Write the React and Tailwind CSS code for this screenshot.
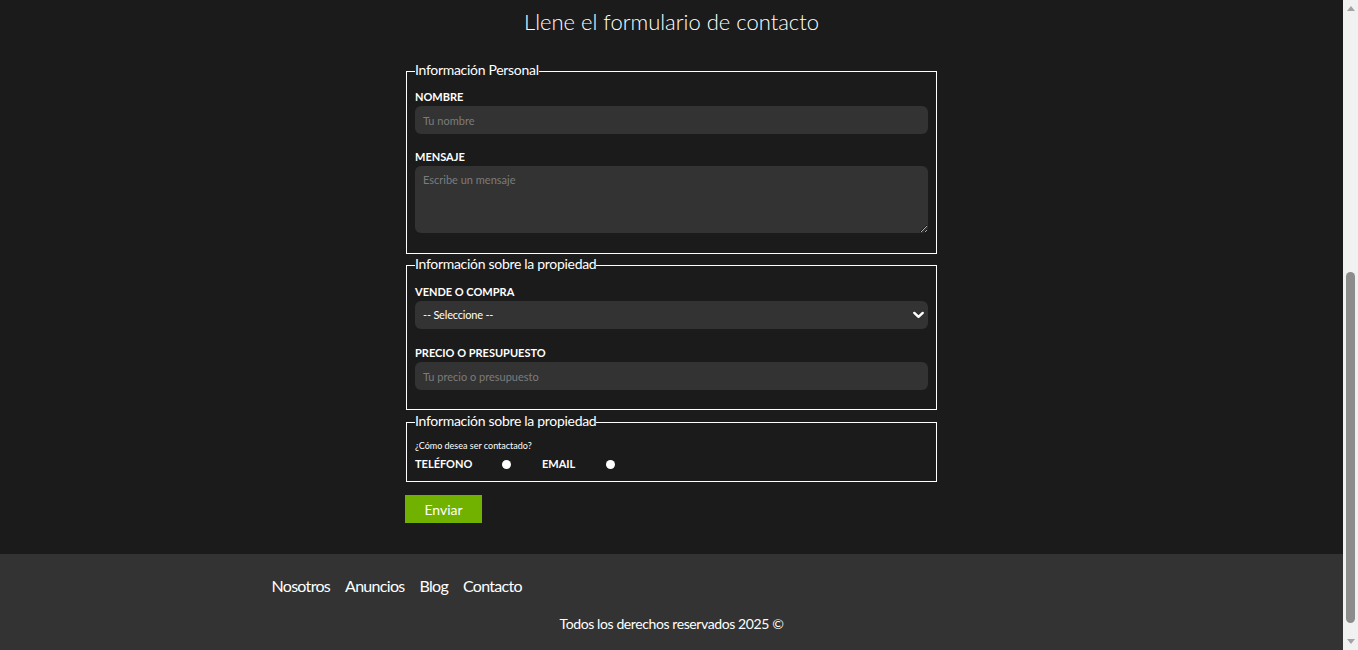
import { useState } from 'react';

const inputCls =
  'block w-full h-[28px] mt-[2px] px-2 rounded-md bg-[#333333] text-white text-[11px] placeholder:text-[#7c7c7c] outline-none';

const labelCls = 'block text-[11px] leading-[14px] font-bold uppercase text-white';

const Legend = ({ children }) => (
  <legend className="text-[14px] leading-[17px] tracking-[-0.3px] text-white">
    <span className="relative -top-[2px]">{children}</span>
  </legend>
);

const Scrollbar = () => (
  <div className="w-[15px] h-full bg-[#f1f1f1] flex flex-col items-center shrink-0">
    <div className="h-[17px] w-full flex items-center justify-center">
      <svg width="8" height="5" viewBox="0 0 8 5">
        <path d="M0 5 L4 0 L8 5 Z" fill="#a3a3a3" />
      </svg>
    </div>
    <div className="h-[255px]" />
    <div className="w-[9px] h-[351px] rounded-full bg-[#8c8c8c]" />
    <div className="flex-1" />
    <div className="h-[17px] w-full flex items-center justify-center">
      <svg width="8" height="5" viewBox="0 0 8 5">
        <path d="M0 0 L4 5 L8 0 Z" fill="#a3a3a3" />
      </svg>
    </div>
  </div>
);

const App = () => {
  const [contact, setContact] = useState('');

  return (
    <div className="flex h-[650px] w-full overflow-hidden font-['Lato','Liberation_Sans',sans-serif]">
      <div className="flex-1 flex flex-col">
        <main className="bg-[#1b1b1b] pt-2 pb-[31px]">
          <h1 className="text-center text-[22px] leading-[28px] font-light text-white">
            Llene el formulario de contacto
          </h1>

          <form className="w-[533px] mx-auto mt-[27px]" onSubmit={e => e.preventDefault()}>
            <fieldset className="mx-px border border-white px-2 pb-[20px]">
              <Legend>Información Personal</Legend>
              <label className={`${labelCls} mt-[10px]`} htmlFor="nombre">Nombre</label>
              <input id="nombre" type="text" placeholder="Tu nombre" className={inputCls} />

              <label className={`${labelCls} mt-[16px]`} htmlFor="mensaje">Mensaje</label>
              <textarea
                id="mensaje"
                placeholder="Escribe un mensaje"
                className="block w-full h-[67px] mt-[2px] px-2 py-[6px] rounded-md bg-[#333333] text-white text-[11px] placeholder:text-[#7c7c7c] outline-none resize-y"
              />
            </fieldset>

            <fieldset className="mx-px mt-[3px] border border-white px-2 pb-[19px]">
              <Legend>Información sobre la propiedad</Legend>
              <label className={`${labelCls} mt-[11px]`} htmlFor="tipo">Vende o Compra</label>
              <div className="relative mt-[2px]">
                <select
                  id="tipo"
                  defaultValue=""
                  className="block w-full h-[28px] px-2 rounded-md bg-[#333333] text-white text-[11px] tracking-[-0.2px] appearance-none outline-none"
                >
                  <option value="" disabled>-- Seleccione --</option>
                  <option value="vende">Vende</option>
                  <option value="compra">Compra</option>
                </select>
                <svg
                  className="absolute right-[4px] top-1/2 -translate-y-1/2 pointer-events-none"
                  width="11" height="7" viewBox="0 0 11 7"
                >
                  <path d="M1.3 1.3 L5.5 5.4 L9.7 1.3" fill="none" stroke="#ffffff" strokeWidth="2.4" strokeLinecap="round" strokeLinejoin="round" />
                </svg>
              </div>

              <label className={`${labelCls} mt-[17px]`} htmlFor="precio">Precio o Presupuesto</label>
              <input id="precio" type="number" placeholder="Tu precio o presupuesto" className={inputCls} />
            </fieldset>

            <fieldset className="mx-px mt-[4px] border border-white px-2 pb-[10px]">
              <Legend>Información sobre la propiedad</Legend>
              <p className="mt-[9px] text-[9px] leading-[12px] text-white">¿Cómo desea ser contactado?</p>
              <div className="mt-[5px] flex items-center">
                <label className={`${labelCls} w-[87px]`} htmlFor="telefono">Teléfono</label>
                <input
                  id="telefono"
                  type="radio"
                  name="contacto"
                  checked={contact === 'telefono'}
                  onChange={() => setContact('telefono')}
                  className="appearance-none w-[9px] h-[9px] rounded-full bg-white"
                />
                <label className={`${labelCls} ml-[31px] w-[64px]`} htmlFor="email">Email</label>
                <input
                  id="email"
                  type="radio"
                  name="contacto"
                  checked={contact === 'email'}
                  onChange={() => setContact('email')}
                  className="appearance-none w-[9px] h-[9px] rounded-full bg-white"
                />
              </div>
            </fieldset>

            <button
              type="submit"
              className="mt-[13px] w-[77px] h-[28px] bg-[#71b100] text-white text-[14px]"
            >
              Enviar
            </button>
          </form>
        </main>

        <footer className="flex-1 bg-[#333333] pt-[22px]">
          <div className="w-[800px] mx-auto">
            <nav className="flex gap-[15px] text-[16px] leading-[19px] tracking-[-0.7px] text-white">
              <a href="#">Nosotros</a>
              <a href="#">Anuncios</a>
              <a href="#">Blog</a>
              <a href="#">Contacto</a>
            </nav>
            <p className="mt-[20px] text-center text-[14px] leading-[17px] tracking-[-0.4px] text-white">
              Todos los derechos reservados 2025 ©
            </p>
          </div>
        </footer>
      </div>
      <Scrollbar />
    </div>
  );
};

export default App;
